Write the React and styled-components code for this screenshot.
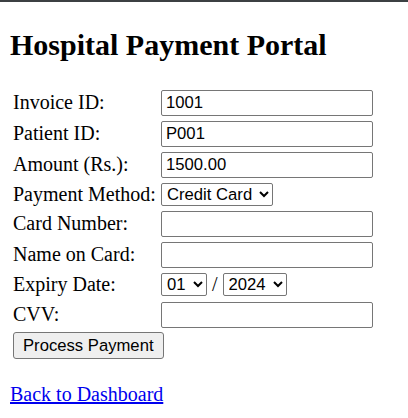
import React from "react";
import styled, { createGlobalStyle } from "styled-components";

const GlobalStyle = createGlobalStyle`
  html, body { margin: 0; padding: 0; background: #ffffff; }
  body {
    font-family: "Liberation Serif", "Times New Roman", serif;
    font-size: 20px;
    color: #000000;
  }
`;

const TopBar = styled.div`
  height: 2px;
  background: #3c4043;
`;

const Page = styled.main`
  padding: 0 10px;
`;

const Title = styled.h1`
  margin: 25px 0 27px;
  font-size: 30px;
  line-height: 35px;
  font-weight: bold;
`;

const Form = styled.form`
  display: flex;
  flex-direction: column;
  gap: 4px;
  padding-left: 3px;
`;

const Row = styled.div`
  display: grid;
  grid-template-columns: 144px 212px;
  column-gap: 4px;
  align-items: center;
  height: ${(p) => p.$h}px;
`;

const Label = styled.label`
  line-height: 23px;
  white-space: nowrap;
`;

const controlFont = `font-family: "Liberation Sans", Arial, sans-serif; font-size: 16.67px;`;

const TextInput = styled.input`
  box-sizing: border-box;
  width: 212px;
  height: 26px;
  margin: 0;
  padding: 1px 4px;
  border: 1px solid #767676;
  border-radius: 2px;
  background: #ffffff;
  color: #000000;
  outline: none;
  ${controlFont}
`;

const Select = styled.select`
  box-sizing: border-box;
  width: ${(p) => p.$w}px;
  height: 23px;
  margin: 0;
  padding: 0 1px;
  border: 1px solid #767676;
  border-radius: 2px;
  background: #ffffff;
  color: #000000;
  outline: none;
  ${controlFont}
`;

const DateGroup = styled.div`
  display: flex;
  align-items: center;
`;

const Slash = styled.span`
  padding: 0 5px;
  line-height: 23px;
`;

const SubmitButton = styled.button`
  grid-column: 1 / span 2;
  justify-self: start;
  box-sizing: border-box;
  height: 27px;
  margin: 0;
  padding: 0 9px;
  border: 1px solid #767676;
  border-radius: 3px;
  background: #efefef;
  color: #000000;
  ${controlFont}
`;

const BackLink = styled.a`
  display: inline-block;
  margin-top: 24px;
  line-height: 23px;
  color: #0000ee;
  text-decoration: underline;
`;

const fields = [
  { id: "invoice", label: "Invoice ID:", value: "1001" },
  { id: "patient", label: "Patient ID:", value: "P001" },
  { id: "amount", label: "Amount (Rs.):", value: "1500.00" },
];

const cardFields = [
  { id: "cardNumber", label: "Card Number:", value: "" },
  { id: "cardName", label: "Name on Card:", value: "" },
];

export default function App() {
  return (
    <>
      <GlobalStyle />
      <TopBar />
      <Page>
        <Title>Hospital Payment Portal</Title>
        <Form onSubmit={(e) => e.preventDefault()}>
          {fields.map((f) => (
            <Row key={f.id} $h={27}>
              <Label htmlFor={f.id}>{f.label}</Label>
              <TextInput id={f.id} type="text" defaultValue={f.value} />
            </Row>
          ))}
          <Row $h={24}>
            <Label htmlFor="method">Payment Method:</Label>
            <div>
              <Select id="method" $w={112} defaultValue="Credit Card">
                <option>Credit Card</option>
                <option>Debit Card</option>
                <option>Cash</option>
              </Select>
            </div>
          </Row>
          {cardFields.map((f) => (
            <Row key={f.id} $h={27}>
              <Label htmlFor={f.id}>{f.label}</Label>
              <TextInput id={f.id} type="text" defaultValue={f.value} />
            </Row>
          ))}
          <Row $h={25}>
            <Label htmlFor="month">Expiry Date:</Label>
            <DateGroup>
              <Select id="month" $w={46} defaultValue="01">
                <option>01</option>
                <option>02</option>
                <option>03</option>
              </Select>
              <Slash>/</Slash>
              <Select id="year" $w={64} defaultValue="2024">
                <option>2024</option>
                <option>2025</option>
                <option>2026</option>
              </Select>
            </DateGroup>
          </Row>
          <Row $h={27}>
            <Label htmlFor="cvv">CVV:</Label>
            <TextInput id="cvv" type="text" defaultValue="" />
          </Row>
          <Row $h={27}>
            <SubmitButton type="submit">Process Payment</SubmitButton>
          </Row>
        </Form>
        <BackLink href="#">Back to Dashboard</BackLink>
      </Page>
    </>
  );
}
